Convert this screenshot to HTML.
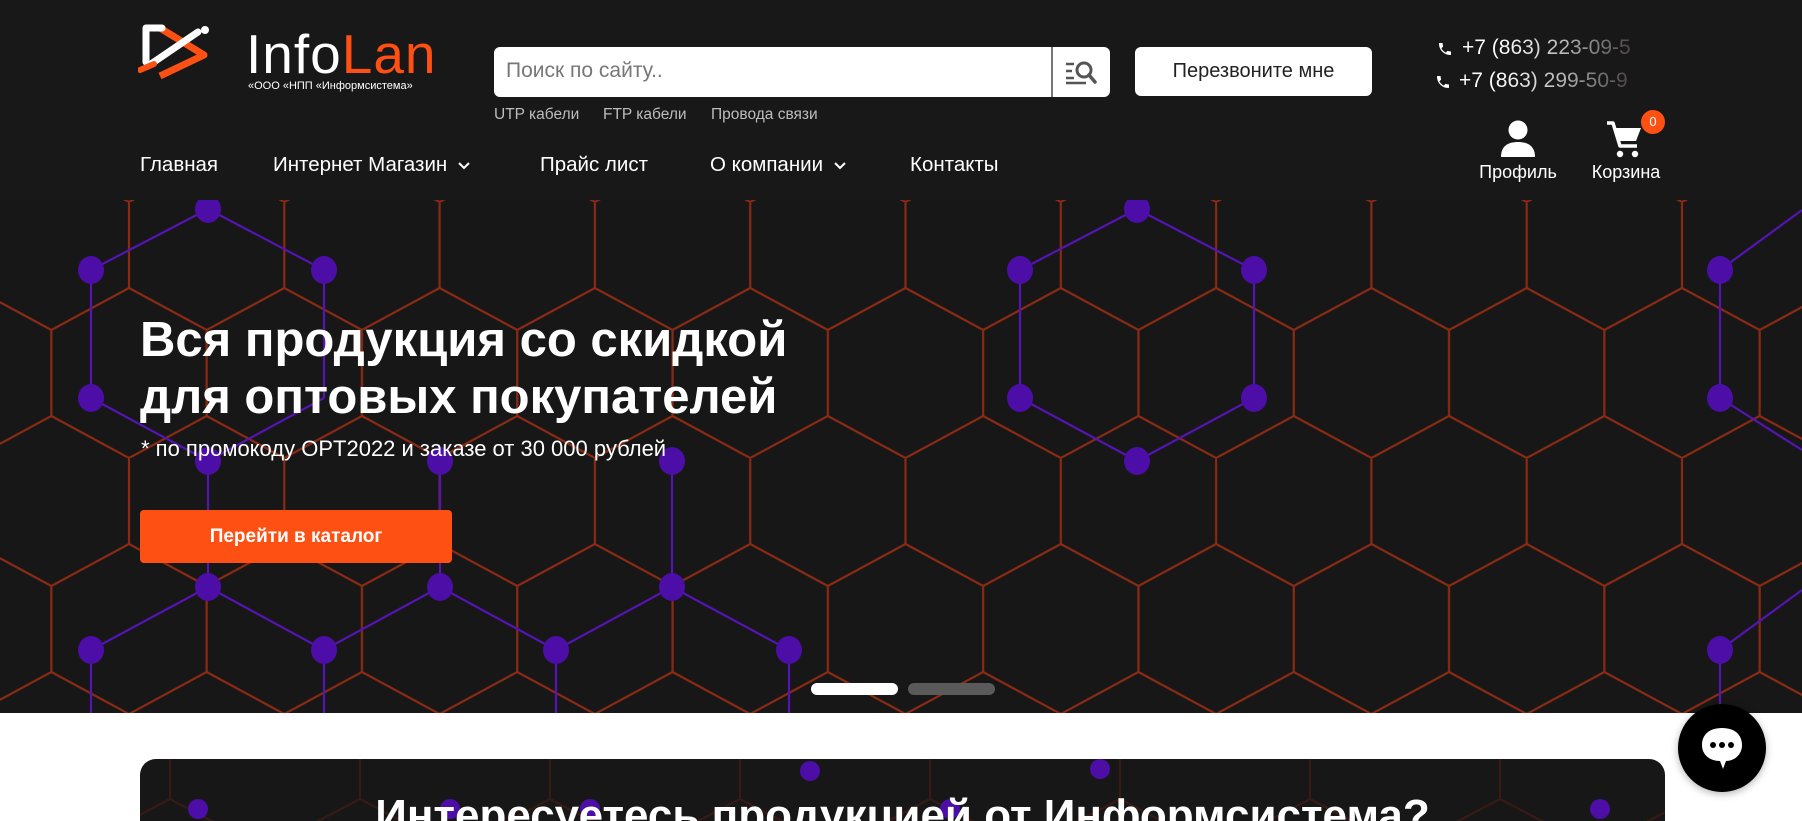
<!DOCTYPE html>
<html><head><meta charset="utf-8"><style>
*{margin:0;padding:0;box-sizing:border-box}
html,body{width:1802px;height:821px;overflow:hidden}
body{background:#fff;font-family:"Liberation Sans","Noto Sans CJK SC",sans-serif;position:relative}
.hdr{position:absolute;left:0;top:0;width:1802px;height:200px;background:#181818}
.abs{position:absolute}
.nav{position:absolute;top:153px;color:#fff;font-size:20.5px;white-space:nowrap}
.tag{position:absolute;top:106px;color:#bdbdbd;font-size:15.5px}
.ph{position:absolute;left:1462px;font-size:21px;white-space:nowrap;background:linear-gradient(90deg,#fff 0,#fff 40px,#bbb 100px,#666 150px,#3a1d2c 190px);-webkit-background-clip:text;background-clip:text;color:transparent}
.hero{position:absolute;left:0;top:200px;width:1802px;height:513px;background:#171717;overflow:hidden}
</style></head><body>
<div class="hdr">
 <svg class="abs" style="left:138px;top:22px" width="96" height="58" viewBox="0 0 96 58">
  <path d="M22 6 L66 33 L22 54" fill="none" stroke="#ff5014" stroke-width="7" stroke-linejoin="round"/>
  <path d="M8 6 L24 6 M8 6 L8 40 M10 44 L60 10" fill="none" stroke="#fff" stroke-width="7" stroke-linecap="round"/>
  <path d="M2 48 L16 42" stroke="#ff5014" stroke-width="6" stroke-linecap="round"/>
  <circle cx="67" cy="8" r="4" fill="#fff"/>
 </svg>
 <div class="abs" style="left:246px;top:24px;font-size:55px;line-height:60px;color:#fff;letter-spacing:1px">Info<span style="color:#ff5014">Lan</span></div>
 <div class="abs" style="left:248px;top:80px;font-size:11px;color:#fff;white-space:nowrap">«ООО «НПП «Информсистема»</div>

 <div class="abs" style="left:494px;top:47px;width:616px;height:50px;background:#fff;border-radius:6px"></div>
 <div class="abs" style="left:506px;top:59px;font-size:21px;color:#777">Поиск по сайту..</div>
 <div class="abs" style="left:1051px;top:47px;width:2px;height:50px;background:#777"></div>
 <svg class="abs" style="left:1064px;top:58px" width="36" height="28" viewBox="0 0 36 28">
  <path d="M2 6H10M2 13H8M2 20H10M2 25H22" stroke="#555" stroke-width="2.5"/>
  <circle cx="20" cy="12" r="7" fill="none" stroke="#555" stroke-width="3"/>
  <path d="M25 17L31 24" stroke="#555" stroke-width="3.5" stroke-linecap="round"/>
 </svg>
 <div class="abs" style="left:1135px;top:47px;width:237px;height:49px;background:#fff;border-radius:6px;font-size:20px;color:#222;text-align:center;line-height:49px">Перезвоните мне</div>
 <div class="tag" style="left:494px">UTP кабели</div>
 <div class="tag" style="left:603px">FTP кабели</div>
 <div class="tag" style="left:711px">Провода связи</div>

 <svg class="abs" style="left:1437px;top:41px" width="16" height="16" viewBox="0 0 24 24"><path fill="#fff" d="M6.6 10.8c1.4 2.8 3.8 5.1 6.6 6.6l2.2-2.2c.3-.3.7-.4 1-.2 1.1.4 2.3.6 3.6.6.6 0 1 .4 1 1V20c0 .6-.4 1-1 1C10.6 21 3 13.4 3 4c0-.6.4-1 1-1h3.5c.6 0 1 .4 1 1 0 1.3.2 2.5.6 3.6.1.3 0 .7-.2 1z"/></svg>
 <svg class="abs" style="left:1435px;top:74px" width="16" height="16" viewBox="0 0 24 24"><path fill="#fff" d="M6.6 10.8c1.4 2.8 3.8 5.1 6.6 6.6l2.2-2.2c.3-.3.7-.4 1-.2 1.1.4 2.3.6 3.6.6.6 0 1 .4 1 1V20c0 .6-.4 1-1 1C10.6 21 3 13.4 3 4c0-.6.4-1 1-1h3.5c.6 0 1 .4 1 1 0 1.3.2 2.5.6 3.6.1.3 0 .7-.2 1z"/></svg>
 <div class="ph" style="top:36px">+7 (863) 223-09-5</div>
 <div class="ph" style="top:69px;left:1459px">+7 (863) 299-50-9</div>

 <div class="nav" style="left:140px">Главная</div>
 <div class="nav" style="left:273px">Интернет Магазин <svg width="14" height="10" viewBox="0 0 14 10" style="margin-left:4px"><path d="M2 2L7 7L12 2" fill="none" stroke="#fff" stroke-width="2"/></svg></div>
 <div class="nav" style="left:540px">Прайс лист</div>
 <div class="nav" style="left:710px">О компании <svg width="14" height="10" viewBox="0 0 14 10" style="margin-left:4px"><path d="M2 2L7 7L12 2" fill="none" stroke="#fff" stroke-width="2"/></svg></div>
 <div class="nav" style="left:910px">Контакты</div>

 <svg class="abs" style="left:1500px;top:120px" width="36" height="38" viewBox="0 0 36 38"><circle cx="18" cy="10" r="9.5" fill="#fff"/><path d="M1 37 C1 26 8 22 18 22 C28 22 35 26 35 37Z" fill="#fff"/></svg>
 <div class="abs" style="left:1470px;top:162px;width:96px;text-align:center;color:#fff;font-size:18px">Профиль</div>
 <svg class="abs" style="left:1605px;top:120px" width="40" height="40" viewBox="0 0 40 40"><path d="M2 3H8L15 26H32" fill="none" stroke="#fff" stroke-width="3.5" stroke-linejoin="round"/><path d="M9 8H36L31 21H14Z" fill="#fff"/><circle cx="15" cy="34" r="3.2" fill="#fff"/><circle cx="30" cy="34" r="3.2" fill="#fff"/></svg>
 <div class="abs" style="left:1578px;top:162px;width:96px;text-align:center;color:#fff;font-size:18px">Корзина</div>
 <div class="abs" style="left:1641px;top:110px;width:24px;height:24px;border-radius:50%;background:#ff5014;color:#fff;font-size:13px;text-align:center;line-height:24px">0</div>
</div>

<div class="hero">
 <svg class="abs" style="left:0;top:0" width="1802" height="513">
  <defs>
   <pattern id="hx" patternUnits="userSpaceOnUse" x="129" y="2" width="155.3" height="256">
    <path d="M0 0V86L77.65 128L155.3 86V0M77.65 128V214L0 256M77.65 214L155.3 256" fill="none" stroke="#8a2a14" stroke-width="2.2"/>
   </pattern>
  </defs>
  <rect width="1802" height="513" fill="url(#hx)"/>
  <g fill="none" stroke="#5514b4" stroke-width="2.2">
   <path d="M91 198V70L208 9L324 70V198"/>
   <path d="M91 198L208 261L324 198"/>
   <path d="M91 450L208 387L324 450L440 387L556 450L672 387L789 450"/>
   <path d="M91 450V513M324 450V513M556 450V513M789 450V513"/>
   <path d="M208 387V261M440 387V261M672 387V261"/>
   <path d="M1020 70L1137 9L1254 70V198L1137 261L1020 198Z"/>
   <path d="M1720 198V70L1802 10M1720 198L1802 250"/>
   <path d="M1720 450V513M1720 450L1802 390"/>
  </g>
  <g fill="#4c0ea6">
   <ellipse cx="208" cy="9" rx="13" ry="14"/><ellipse cx="91" cy="70" rx="13" ry="14"/><ellipse cx="324" cy="70" rx="13" ry="14"/>
   <ellipse cx="91" cy="198" rx="13" ry="14"/><ellipse cx="208" cy="261" rx="13" ry="14"/><ellipse cx="440" cy="261" rx="13" ry="14"/><ellipse cx="672" cy="261" rx="13" ry="14"/>
   <ellipse cx="208" cy="387" rx="13" ry="14"/><ellipse cx="440" cy="387" rx="13" ry="14"/><ellipse cx="672" cy="387" rx="13" ry="14"/>
   <ellipse cx="91" cy="450" rx="13" ry="14"/><ellipse cx="324" cy="450" rx="13" ry="14"/><ellipse cx="556" cy="450" rx="13" ry="14"/><ellipse cx="789" cy="450" rx="13" ry="14"/>
   <ellipse cx="1137" cy="9" rx="13" ry="14"/><ellipse cx="1020" cy="70" rx="13" ry="14"/><ellipse cx="1254" cy="70" rx="13" ry="14"/>
   <ellipse cx="1020" cy="198" rx="13" ry="14"/><ellipse cx="1254" cy="198" rx="13" ry="14"/><ellipse cx="1137" cy="261" rx="13" ry="14"/>
   <ellipse cx="1720" cy="70" rx="13" ry="14"/><ellipse cx="1720" cy="198" rx="13" ry="14"/><ellipse cx="1720" cy="450" rx="13" ry="14"/>
  </g>
 </svg>
 <div class="abs" style="left:140px;top:112px;color:#fff;font-size:49px;font-weight:bold;line-height:57px;white-space:nowrap">Вся продукция со скидкой<br>для оптовых покупателей</div>
 <div class="abs" style="left:141px;top:236px;color:#fff;font-size:22px;white-space:nowrap">* по промокоду OPT2022 и заказе от 30 000 рублей</div>
 <div class="abs" style="left:140px;top:310px;width:312px;height:53px;background:#ff5014;border-radius:4px;color:#fff;font-size:19px;font-weight:bold;text-align:center;line-height:53px">Перейти в каталог</div>
 <div class="abs" style="left:811px;top:483px;width:87px;height:12px;border-radius:6px;background:#fff"></div>
 <div class="abs" style="left:908px;top:483px;width:87px;height:12px;border-radius:6px;background:#5a5a5a"></div>
</div>

<div class="abs" style="left:140px;top:759px;width:1525px;height:100px;border-radius:16px;background:#171717;overflow:hidden">
 <svg class="abs" style="left:0;top:0" width="1525" height="100">
  <defs><pattern id="hx2" patternUnits="userSpaceOnUse" x="30" y="-60" width="190" height="300"><path d="M0 0V100L95 150L190 100V0M95 150V250" fill="none" stroke="#3a1a14" stroke-width="2"/></pattern></defs>
  <rect width="1525" height="100" fill="url(#hx2)"/>
  <g fill="#4c0ea6"><circle cx="58" cy="50" r="10"/><circle cx="310" cy="50" r="10"/><circle cx="450" cy="50" r="10"/><circle cx="670" cy="12" r="10"/><circle cx="810" cy="50" r="10"/><circle cx="960" cy="10" r="10"/><circle cx="1460" cy="50" r="10"/></g>
 </svg>
 <div class="abs" style="left:0;top:32px;width:1525px;text-align:center;color:#fff;font-size:44px;font-weight:bold;white-space:nowrap">Интересуетесь продукцией от Информсистема?</div>
</div>

<div class="abs" style="left:1678px;top:704px;width:88px;height:88px;border-radius:50%;background:#000;box-shadow:0 2px 8px rgba(0,0,0,.3)"></div>
<svg class="abs" style="left:1696px;top:724px" width="52" height="50" viewBox="0 0 52 50"><path d="M26 4C39 4 46 11 46 21C46 31 38 37 30 37L27 45L24 37C14 37 6 31 6 21C6 11 13 4 26 4Z" fill="#fff"/><circle cx="17" cy="21" r="3" fill="#000"/><circle cx="26" cy="21" r="3" fill="#000"/><circle cx="35" cy="21" r="3" fill="#000"/></svg>
</body></html>
